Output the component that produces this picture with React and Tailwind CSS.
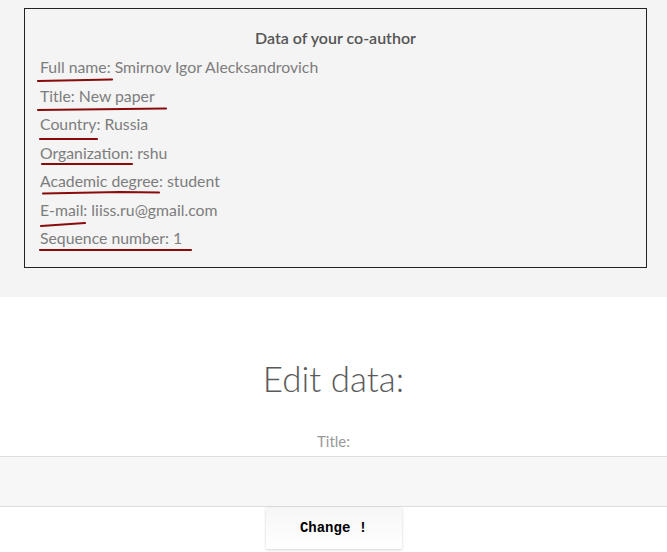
import React from 'react'

const rows = [
  { label: 'Full name', value: 'Smirnov Igor Alecksandrovich', line: '-2 11 72 9.5' },
  { label: 'Title', value: 'New paper', line: '-2 11 126 9.5' },
  { label: 'Country', value: 'Russia', line: '0 12 57 12' },
  { label: 'Organization', value: 'rshu', line: '2 8 92 8' },
  { label: 'Academic degree', value: 'student', line: '3 9.5 80 8 119 8.5' },
  { label: 'E-mail', value: 'liiss.ru@gmail.com', line: '1 13 45 10' },
  { label: 'Sequence number', value: '1', line: '0 9 151 9' },
]

function Row({ label, value, line }) {
  return (
    <div className="relative h-[28.5px] leading-[28.5px]">
      <span>{label}: {value}</span>
      {/* hand drawn marker under the label */}
      <svg className="absolute left-0 top-[17px] overflow-visible" width="160" height="16">
        <polyline points={line} fill="none" stroke="#8a0b0b" strokeWidth="2.2" strokeLinecap="round" />
      </svg>
    </div>
  )
}

export default function App() {
  return (
    <div className="min-h-[552px] bg-white" style={{ fontFamily: 'Lato, "Open Sans", sans-serif' }}>
      {/* co-author card */}
      <section className="h-[297px] bg-[#f4f4f4] pt-[8px]">
        <div className="ml-[24px] w-[623px] border border-[#222] pt-[18px] pb-[14px] text-[#7d7d7d]">
          <h3 className="mb-[4px] text-center text-[16px] leading-[22px] font-semibold text-[#555]">
            Data of your co-author
          </h3>
          <div className="pl-[15px] text-[15.8px]">
            {rows.map((r) => (
              <Row key={r.label} {...r} />
            ))}
          </div>
        </div>
      </section>

      {/* edit form */}
      <section className="flex flex-col items-center">
        <h1 className="mt-[56px] text-[35px] leading-[50px] font-light text-[#5a5a5a]">Edit data:</h1>
        <label className="mt-[28px] text-[15px] leading-[20px] text-[#999]">Title:</label>
        <input
          className="mt-[5px] h-[51px] w-full border-y border-[#dedede] bg-[#f7f7f7] outline-none"
          type="text"
        />
        <button
          className="h-[42px] w-[136px] rounded-[2px] bg-gradient-to-b from-[#f6f6f6] to-white text-[14px] font-bold text-black shadow-[0_1px_3px_rgba(0,0,0,0.18)]"
          style={{ fontFamily: '"Liberation Mono", "Courier New", monospace' }}
        >
          Change !
        </button>
      </section>
    </div>
  )
}
